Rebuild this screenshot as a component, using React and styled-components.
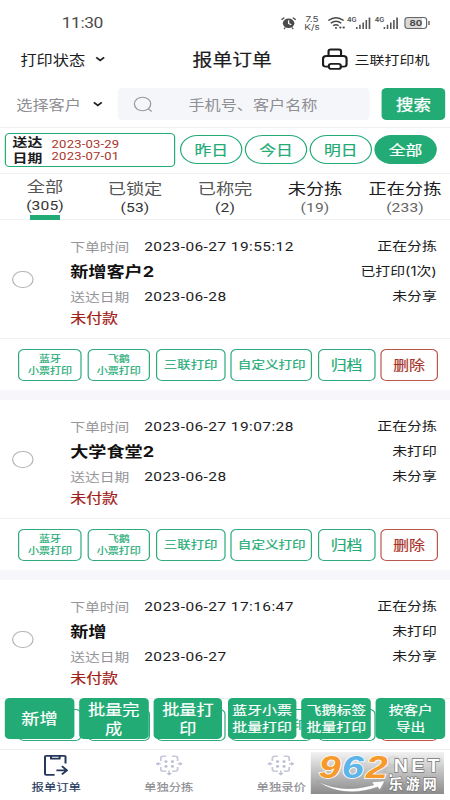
import React from "react";
import styled, { createGlobalStyle } from "styled-components";

const GREEN = "#23ab76";
const RED = "#a8352b";

const Global = createGlobalStyle`
  * { box-sizing: border-box; }
  html, body { margin: 0; padding: 0; background: #fff; overflow: hidden; }
`;

const Screen = styled.div`
  position: relative;
  width: 375px;
  height: 800px;
  overflow: hidden;
  transform: scaleX(1.2);
  transform-origin: 0 0;
  background: #fff;
  color: #1c1c1e;
  font-family: Inter, "Noto Sans CJK SC", sans-serif;
  font-size: 12.5px;
  white-space: nowrap;
`;

const StatusBar = styled.div`
  height: 38px;
  padding: 8px 17px 0 51.5px;
  display: flex;
  align-items: center;
  color: #4a4a4a;
`;
const Clock = styled.span`
  font-family: Roboto, sans-serif;
  font-size: 14.5px;
  letter-spacing: -0.4px;
  flex: 1;
`;
const StatusIcons = styled.div`
  display: flex;
  align-items: center;
  height: 24px;
`;
const Speed = styled.div`
  width: 15px;
  margin: 0 5.5px 0 6px;
  text-align: center;
  font-size: 8.2px;
  line-height: 8px;
`;
const Battery = styled.div`
  position: relative;
  width: 19px;
  height: 12px;
  margin-left: 4px;
  margin-right: 2px;
  border: 1.2px solid #666;
  border-radius: 3px;
  background: linear-gradient(90deg, #d9d9d9 78%, #fff 78%);
  font-size: 8px;
  font-weight: 700;
  line-height: 10px;
  text-align: center;
  &::after {
    content: "";
    position: absolute;
    right: -3px;
    top: 3px;
    width: 1.3px;
    height: 4px;
    background: #4a4a4a;
  }
`;

const Header = styled.header`
  height: 44px;
  padding-bottom: 1.5px;
  display: grid;
  grid-template-columns: 143px 101px 131px;
  align-items: center;
`;
const Picker = styled.div`
  display: flex;
  align-items: center;
  gap: ${(p) => p.$gap}px;
  padding-left: ${(p) => p.$left}px;
  font-size: 13.5px;
  color: ${(p) => p.$color};
  width: ${(p) => p.$width};
`;
const Title = styled.div`
  font-size: 16.5px;
  text-align: center;
  -webkit-text-stroke: 0.2px currentColor;
`;
const Printer = styled.div`
  display: flex;
  align-items: center;
  gap: 5.5px;
  padding-left: 24px;
`;

const SearchRow = styled.div`
  height: 46px;
  padding: 6px 4px 7px 0;
  display: flex;
  align-items: stretch;
  border-bottom: 1px solid #f0f0f1;
`;
const SearchBox = styled.div`
  width: 210px;
  margin-right: 10px;
  border-radius: 4px;
  background: #f5f6fa;
  display: flex;
  align-items: center;
  padding-left: 12.5px;
  gap: 29.5px;
  color: #8e8e93;
  font-size: 13.45px;
`;
const SearchButton = styled.button`
  flex: 1;
  border: 0;
  padding: 0 0 1px;
  border-radius: 4px;
  background: ${GREEN};
  color: #fff;
  font: 400 14.5px Inter, "Noto Sans CJK SC", sans-serif;
  -webkit-text-stroke: 0.3px currentColor;
`;

const FilterRow = styled.div`
  height: 46px;
  padding: 5px 11px 7px 4px;
  display: flex;
  align-items: center;
  border-bottom: 1px solid #f0f0f1;
`;
const DateRange = styled.div`
  width: 142px;
  height: 34px;
  margin-right: 4px;
  padding-left: 5.5px;
  border: 1px solid ${GREEN};
  border-radius: 4px;
  display: flex;
  align-items: center;
  gap: 7.5px;
`;
const DateTitle = styled.div`
  width: 25px;
  padding-top: 2px;
  font-size: 12.4px;
  font-weight: 700;
  line-height: 15.7px;
`;
const DateValues = styled.div`
  padding-top: 2px;
  color: ${RED};
  font-family: Roboto, sans-serif;
  font-size: 10.9px;
  letter-spacing: 0.15px;
  line-height: 12px;
`;
const Pills = styled.div`
  flex: 1;
  display: grid;
  grid-template-columns: repeat(4, 1fr);
  gap: 2px;
`;
const Pill = styled.div`
  height: 29px;
  padding-bottom: 1px;
  border: 1px solid ${GREEN};
  border-radius: 15px;
  display: flex;
  align-items: center;
  justify-content: center;
  font-size: 14px;
  color: ${(p) => (p.$active ? "#fff" : GREEN)};
  background: ${(p) => (p.$active ? GREEN : "#fff")};
  -webkit-text-stroke: 0.2px currentColor;
`;

const Tabs = styled.div`
  height: 46px;
  display: grid;
  grid-template-columns: repeat(5, 75px);
  border-bottom: 1px solid #f0f0f1;
`;
const Tab = styled.div`
  display: flex;
  flex-direction: column;
  align-items: center;
  padding-top: ${(p) => (p.$active ? 4 : 6)}px;
  font-size: 15.2px;
  line-height: 18px;
  color: ${(p) => (p.$dark ? "#1c1c1e" : "#555")};
`;
const Count = styled.span`
  padding-top: 1px;
  font-family: Roboto, sans-serif;
  font-size: 13px;
  letter-spacing: 0.1px;
  color: ${(p) => (p.$dark ? "#666" : "#333")};
`;
const Underline = styled.i`
  width: 25px;
  height: 4.5px;
  background: ${GREEN};
`;

const Card = styled.section`
  height: 180px;
  border-bottom: 10px solid #f6f6fb;
`;
const CardBody = styled.div`
  height: 119px;
  padding: 14px 11px 0 10px;
  display: flex;
  border-bottom: 1px solid #f0f0f1;
`;
const Radio = styled.i`
  width: 17.5px;
  height: 17.5px;
  margin: 36.5px 31px 0 0;
  border: 1px solid #b5b5b8;
  border-radius: 50%;
`;
const Details = styled.div`
  flex: 1;
`;
const Line = styled.div`
  height: ${(p) => p.$h}px;
  display: flex;
  align-items: center;
  gap: 12.5px;
`;
const Caption = styled.span`
  color: #96969a;
  font-size: 12.3px;
`;
const Stamp = styled.span`
  font-family: Roboto, sans-serif;
  font-size: 12.9px;
  letter-spacing: 0.35px;
`;
const Customer = styled.b`
  font-size: 15.1px;
  font-weight: 700;
  color: #111;
  padding-bottom: 3px;
`;
const Unpaid = styled.span`
  font-size: 13.3px;
  color: #a02018;
  padding-bottom: 3px;
  -webkit-text-stroke: 0.2px currentColor;
`;
const States = styled.div`
  display: flex;
  flex-direction: column;
  align-items: flex-end;
  font-size: 12.4px;
  line-height: 25px;
`;
const Actions = styled.div`
  display: grid;
  grid-template-columns: 53px 52.5px 58px 68px 47.5px 47.5px;
  gap: 4.6px;
  padding: 10px 0 0 15.2px;
`;
const Action = styled.button`
  height: 32px;
  padding: 0;
  border: 1px solid ${(p) => (p.$danger ? "#b9574f" : "#2eaa7b")};
  border-radius: 5px;
  background: #fff;
  color: ${(p) => (p.$danger ? RED : GREEN)};
  font: 400 ${(p) => p.$size}px / 12px Inter, "Noto Sans CJK SC", sans-serif;
  white-space: pre;
  -webkit-text-stroke: 0.18px currentColor;
`;

const BatchBar = styled.div`
  position: absolute;
  left: 4px;
  right: 4px;
  top: 698px;
  height: 41px;
  display: grid;
  grid-template-columns: repeat(6, 1fr);
  gap: 4.2px;
`;
const Batch = styled.button`
  padding: 0;
  border: 0;
  border-radius: 4px;
  background: ${GREEN};
  color: #fff;
  font: 400 ${(p) => p.$size}px / ${(p) => p.$lh}px Inter, "Noto Sans CJK SC", sans-serif;
  white-space: pre;
  -webkit-text-stroke: 0.2px currentColor;
`;

const NavBar = styled.nav`
  position: absolute;
  left: 0;
  right: 0;
  top: 749px;
  height: 51px;
  display: grid;
  grid-template-columns: repeat(4, 1fr);
  border-top: 1px solid #ededee;
  background: #fff;
`;
const NavItem = styled.div`
  display: flex;
  flex-direction: column;
  align-items: center;
  padding-top: 4px;
  gap: 4px;
  font-size: 10.3px;
  line-height: 15px;
  color: ${(p) => (p.$active ? "#26395b" : "#8c8c90")};
  -webkit-text-stroke: 0.15px currentColor;
`;

const Watermark = styled.div`
  position: absolute;
  left: 259.2px;
  top: 752px;
  width: 110.8px;
  height: 42px;
  background: linear-gradient(180deg, rgba(240, 240, 240, 0.85), rgba(130, 130, 130, 0.92));
  svg { display: block; }
`;

const Chevron = () => (
  <svg width="9" height="8" viewBox="0 0 9 8" fill="none" stroke="#222" strokeWidth="1.5">
    <path d="M1.2 2.4 4.5 5.4 7.8 2.4" />
  </svg>
);
const Alarm = () => (
  <svg width="13" height="14" viewBox="0 0 13 14">
    <circle cx="6.5" cy="7.3" r="4.8" fill="#4a4a4a" />
    <path d="M.6 3.8 3 1.6M12.4 3.8 10 1.6M2.6 13l1.2-1.5M10.4 13l-1.2-1.5" stroke="#4a4a4a" strokeWidth="1.2" />
    <path d="M6.5 4.2v3.3l2.2 1.2" fill="none" stroke="#fff" strokeWidth="1.1" />
  </svg>
);
const Wifi = () => (
  <svg width="15" height="14" viewBox="0 0 15 14" fill="none" stroke="#4a4a4a" strokeWidth="1.3">
    <path d="M.6 4.6Q7 -1 13.4 4.6M2.6 7.2Q7 3.4 11.4 7.2M4.6 9.8Q7 7.8 9.2 9.8" />
    <circle cx="7" cy="11.9" r=".9" fill="#4a4a4a" stroke="none" />
    <circle cx="10.6" cy="11.6" r="1" fill="#4a4a4a" stroke="none" />
    <circle cx="13.4" cy="11.6" r="1" fill="#4a4a4a" stroke="none" />
  </svg>
);
const Signal = () => (
  <svg width="22.5" height="14" viewBox="0 0 22.5 14" fill="#555">
    <text x="1.2" y="5.8" fontSize="5.6" fontWeight="700" fontFamily="Inter, sans-serif">4G</text>
    <path d="M8.7 11h1.3v2H8.7zM11.3 8.8h1.3V13h-1.3zM14 6.4h1.3V13H14zM16.6 4h1.3v9h-1.3zM19.2 1.4h1.4V13h-1.4z" />
  </svg>
);
const PrinterIcon = () => (
  <svg width="22" height="22" viewBox="0 0 22 22" fill="none" stroke="#1c1c1e" strokeWidth="1.8" strokeLinejoin="round">
    <path d="M5.8 7.8V3.2Q5.8 1.5 7.5 1.5h7q1.7 0 1.7 1.7v4.6" />
    <path d="M5.8 18.6H3.6Q1.2 18.6 1.2 16.2V10.8Q1.2 8 4 8h14q2.8 0 2.8 2.8v5.4q0 2.4-2.4 2.4h-2.2" />
    <rect x="6" y="15.9" width="10" height="5" rx="2" />
  </svg>
);
const Magnifier = () => (
  <svg width="17" height="17" viewBox="0 0 17 17" fill="none" stroke="#99999e" strokeWidth="1.1">
    <circle cx="7.8" cy="8" r="6.8" />
    <path d="m12.6 12.9 2.8 2.6" />
  </svg>
);
const OrderIcon = () => (
  <svg width="21" height="22" viewBox="0 0 21 22" fill="none" stroke="#26395b" strokeWidth="1.7" strokeLinejoin="round">
    <path d="M18.6 9.5V2.8Q18.6 1.8 17.6 1.8H2.5q-1 0-1 1V19.8q0 1 1 1h7" />
    <path d="M6.5 1.8v2.9h7.2V1.8" />
    <path d="M11 16.3h8.6M15.6 12.2l4.2 4.1-4.2 4.1" />
  </svg>
);
const SortIcon = () => (
  <svg width="22" height="22" viewBox="0 0 22 22" fill="none" stroke="#c7c8d9" strokeWidth="1.5">
    <path d="M4 7V4.2Q4 2.2 6 2.2h2.6M13.4 2.2H16q2 0 2 2V7M18 13v2.3q0 2-2 2h-2.6M8.6 17.3H6q-2 0-2-2V13M0 9.8h4M22 9.8h-4M11 16.5v4.5" />
    <g fill="#bdbed2" stroke="none">
      <circle cx="8.3" cy="7.6" r="1.35" /><circle cx="13.7" cy="7.6" r="1.35" />
      <circle cx="8.3" cy="12.4" r="1.35" /><circle cx="13.7" cy="12.4" r="1.35" />
      <path d="m0 9.8 2.4-2v4zM22 9.8l-2.4-2v4zM11 21.5l-2.4-2.4h4.8z" />
    </g>
  </svg>
);
const PersonIcon = () => (
  <svg width="22" height="22" viewBox="0 0 22 22" fill="none" stroke="#b5b5bd" strokeWidth="1.8">
    <circle cx="11" cy="7" r="4.5" />
    <path d="M2.5 20q1-7 8.5-7t8.5 7" />
  </svg>
);

const MarkArt = () => (
  <svg width="110.8" height="42" viewBox="0 0 133 42" preserveAspectRatio="none">
    <g fontFamily="'Liberation Sans', sans-serif" fontWeight="700" fontStyle="italic" fontSize="32" stroke="#fff" strokeWidth="1.6" paintOrder="stroke">
      <text x="8" y="26" fill="#f79a2c" textLength="22" lengthAdjust="spacingAndGlyphs">9</text>
      <text x="31" y="26" fill="#5cb4e8" textLength="22" lengthAdjust="spacingAndGlyphs">6</text>
      <text x="55" y="26" fill="#f79a2c" textLength="22" lengthAdjust="spacingAndGlyphs">2</text>
    </g>
    <path d="M6 29q25 13 57 4l-2-3 13-1-5 9-2-3Q32 47 6 29z" fill="#fff" stroke="#888" strokeWidth=".4" />
    <g fill="#fff" stroke="#777" strokeWidth="1.3" paintOrder="stroke">
      <text x="78" y="25" fontSize="18" fontWeight="700" fontFamily="'Liberation Sans', sans-serif" textLength="4" lengthAdjust="spacingAndGlyphs">.</text>
      <text x="83" y="20.5" fontSize="18" fontWeight="700" fontFamily="'Liberation Sans', sans-serif" letterSpacing="3" textLength="49" lengthAdjust="spacingAndGlyphs">NET</text>
      <text x="78" y="37" fontSize="14" fontWeight="700" fontFamily="'Noto Sans CJK SC', sans-serif" letterSpacing="3" textLength="51" lengthAdjust="spacing">乐游网</text>
    </g>
  </svg>
);

const tabs = [
  { name: "全部", count: 305, active: true },
  { name: "已锁定", count: 53 },
  { name: "已称完", count: 2 },
  { name: "未分拣", count: 19, dark: true },
  { name: "正在分拣", count: 233, dark: true },
];
const orders = [
  { time: "2023-06-27 19:55:12", name: "新增客户2", due: "2023-06-28", printed: "已打印(1次)" },
  { time: "2023-06-27 19:07:28", name: "大学食堂2", due: "2023-06-28", printed: "未打印" },
  { time: "2023-06-27 17:16:47", name: "新增", due: "2023-06-27", printed: "未打印" },
];
const actions = [
  ["蓝牙\n小票打印", 9.2],
  ["飞鹅\n小票打印", 9.2],
  ["三联打印", 11.2],
  ["自定义打印", 11.3],
  ["归档", 13.2],
  ["删除", 13.2, true],
];
const batches = [
  ["新增", 15.2, 20],
  ["批量完\n成", 14.3, 19],
  ["批量打\n印", 14.3, 19],
  ["蓝牙小票\n批量打印", 12.4, 17],
  ["飞鹅标签\n批量打印", 12.4, 17],
  ["按客户\n导出", 12.2, 17],
];

function Order({ order }) {
  return (
    <Card>
      <CardBody>
        <Radio />
        <Details>
          <Line $h={25}><Caption>下单时间</Caption><Stamp>{order.time}</Stamp></Line>
          <Line $h={25}><Customer>{order.name}</Customer></Line>
          <Line $h={25}><Caption>送达日期</Caption><Stamp>{order.due}</Stamp></Line>
          <Line $h={19}><Unpaid>未付款</Unpaid></Line>
        </Details>
        <States>
          <span>正在分拣</span>
          <span>{order.printed}</span>
          <span>未分享</span>
        </States>
      </CardBody>
      <Actions>
        {actions.map(([label, size, danger]) => (
          <Action key={label} $size={size} $danger={danger}>{label}</Action>
        ))}
      </Actions>
    </Card>
  );
}

export default function App() {
  return (
    <>
      <Global />
      <Screen>
        <StatusBar>
          <Clock>11:30</Clock>
          <StatusIcons>
            <Alarm />
            <Speed>7.5<br />K/s</Speed>
            <Wifi />
            <Signal />
            <Signal />
            <Battery>80</Battery>
          </StatusIcons>
        </StatusBar>
        <Header>
          <Picker $left={17} $gap={7.5} $color="#1c1c1e" $width="auto">打印状态<Chevron /></Picker>
          <Title>报单订单</Title>
          <Printer><PrinterIcon />三联打印机</Printer>
        </Header>
        <SearchRow>
          <Picker $left={13.5} $gap={9.5} $color="#8e8e93" $width="98px">选择客户<Chevron /></Picker>
          <SearchBox><Magnifier />手机号、客户名称</SearchBox>
          <SearchButton>搜索</SearchButton>
        </SearchRow>
        <FilterRow>
          <DateRange>
            <DateTitle>送达<br />日期</DateTitle>
            <DateValues>2023-03-29<br />2023-07-01</DateValues>
          </DateRange>
          <Pills>
            <Pill>昨日</Pill>
            <Pill>今日</Pill>
            <Pill>明日</Pill>
            <Pill $active>全部</Pill>
          </Pills>
        </FilterRow>
        <Tabs>
          {tabs.map((t) => (
            <Tab key={t.name} $active={t.active} $dark={t.dark}>
              {t.name}
              <Count $dark={t.dark}>({t.count})</Count>
              {t.active && <Underline />}
            </Tab>
          ))}
        </Tabs>
        {orders.map((o) => <Order key={o.time} order={o} />)}
        <BatchBar>
          {batches.map(([label, size, lh]) => (
            <Batch key={label} $size={size} $lh={lh}>{label}</Batch>
          ))}
        </BatchBar>
        <NavBar>
          <NavItem $active><OrderIcon />报单订单</NavItem>
          <NavItem><SortIcon />单独分拣</NavItem>
          <NavItem><SortIcon />单独录价</NavItem>
          <NavItem><PersonIcon />我的</NavItem>
        </NavBar>
        <Watermark><MarkArt /></Watermark>
      </Screen>
    </>
  );
}
